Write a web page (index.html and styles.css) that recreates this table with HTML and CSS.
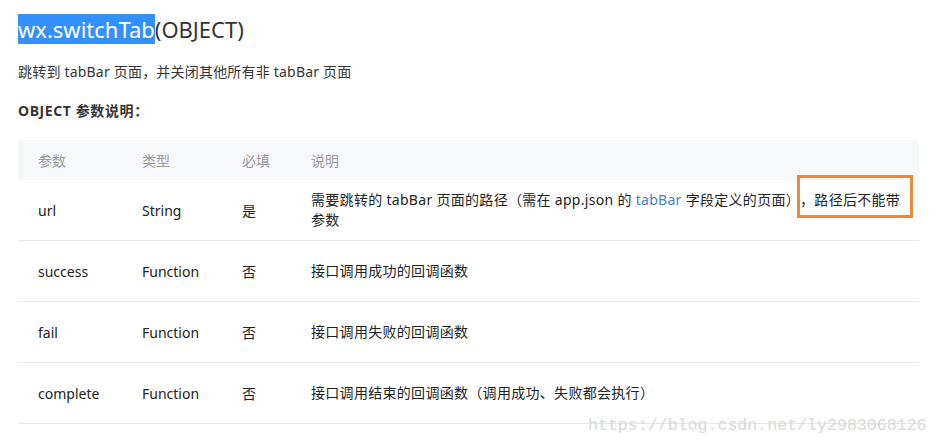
FILE: index.html
```html
<!DOCTYPE html>
<html lang="zh">
<head>
<meta charset="utf-8">
<link rel="stylesheet" href="styles.css">
</head>
<body>
<div class="page">
  <h1 class="title"><span class="sel">wx.switchTab</span>(OBJECT)</h1>
  <p class="lead">跳转到 tabBar 页面，并关闭其他所有非 tabBar 页面</p>
  <p class="sub">OBJECT 参数说明：</p>
  <table class="params">
    <thead>
      <tr><th class="c1">参数</th><th class="c2">类型</th><th class="c3">必填</th><th class="c4">说明</th></tr>
    </thead>
    <tbody>
      <tr><td>url</td><td>String</td><td>是</td><td class="desc nowrap">需要跳转的 tabBar 页面的路径（需在 app.json 的 <span class="link">tabBar</span> 字段定义的页面）<span class="mark">，路径后不能带</span><br>参数</td></tr>
      <tr><td>success</td><td>Function</td><td>否</td><td class="desc">接口调用成功的回调函数</td></tr>
      <tr><td>fail</td><td>Function</td><td>否</td><td class="desc">接口调用失败的回调函数</td></tr>
      <tr><td>complete</td><td>Function</td><td>否</td><td class="desc">接口调用结束的回调函数（调用成功、失败都会执行）</td></tr>
    </tbody>
  </table>
  <div class="watermark">https://blog.csdn.net/ly2983068126</div>
</div>
</body>
</html>
```
FILE: styles.css
```css
html, body {
  margin: 0;
  padding: 0;
  background: #fff;
}
body {
  font-family: "Noto Sans", "Noto Sans CJK SC", sans-serif;
  color: #353535;
  text-spacing-trim: space-all;
}
.page {
  position: relative;
  width: 939px;
  height: 447px;
  padding: 16px 0 0 18px;
  box-sizing: border-box;
  overflow: hidden;
}
.title {
  margin: 0;
  font-size: 22px;
  font-weight: normal;
  line-height: 27px;
  height: 27px;
}
.sel {
  background: #3390ff;
  color: #fff;
}
.lead {
  margin: 19px 0 0;
  font-size: 14px;
  line-height: 20px;
  letter-spacing: 0.2px;
  color: #353535;
}
.sub {
  margin: 19px 0 0;
  font-size: 14px;
  line-height: 20px;
  font-weight: bold;
  letter-spacing: 0.6px;
  color: #353535;
}
.params {
  margin-top: 19px;
  width: 901px;
  border-collapse: collapse;
  font-size: 14px;
}
.params th {
  background: #f7f8fa;
  color: #9a9a9a;
  font-weight: normal;
  font-size: 14px;
  text-align: left;
  height: 40px;
  padding: 0;
}
.params .c1 { width: 104px; padding-left: 20px; }
.params .c2 { width: 100px; }
.params .c3 { width: 69px; }
.params td {
  height: 60px;
  padding: 0;
  border-bottom: 1px solid #e6e6e9;
  color: #222;
  vertical-align: middle;
}
.params td:first-child {
  padding-left: 20px;
}
.params td.desc {
  font-size: 14px;
  line-height: 20px;
  letter-spacing: 0.3px;
}
.params td.nowrap {
  white-space: nowrap;
}
.link {
  color: #4a7ec5;
}
.mark {
  position: relative;
}
.mark::after {
  content: "";
  position: absolute;
  left: -3px;
  right: -13px;
  top: -15px;
  bottom: -9px;
  border: 3px solid #f0883a;
}
.watermark {
  position: absolute;
  left: 588px;
  top: 416px;
  font-family: "Liberation Mono", "DejaVu Sans Mono", monospace;
  font-size: 16.6px;
  color: #d9d9d9;
}
```
